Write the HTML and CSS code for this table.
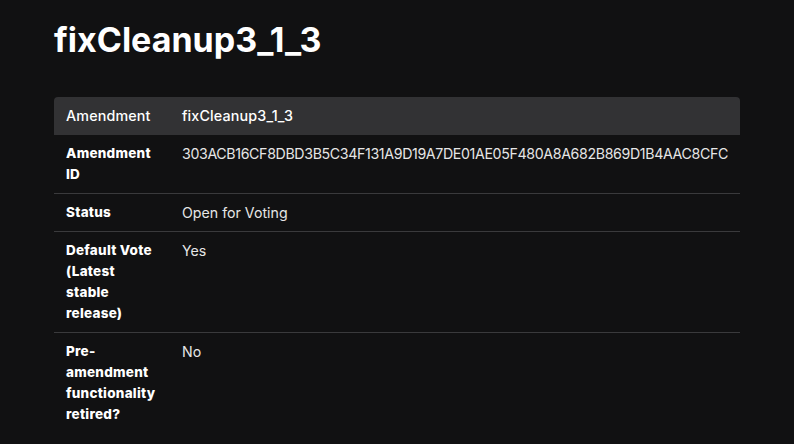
FILE: index.html
```html
<!DOCTYPE html>
<html>
<head>
<meta charset="utf-8">
<link rel="stylesheet" href="styles.css">
</head>
<body>
<main class="page">
  <h1 class="title">fixCleanup3_1_3</h1>
  <table class="amend">
    <thead>
      <tr><th class="label">Amendment</th><th class="value">fixCleanup3_1_3</th></tr>
    </thead>
    <tbody>
      <tr><td class="label">Amendment ID</td><td class="value hex">303ACB16CF8DBD3B5C34F131A9D19A7DE01AE05F480A8A682B869D1B4AAC8CFC</td></tr>
      <tr><td class="label">Status</td><td class="value">Open for Voting</td></tr>
      <tr><td class="label">Default Vote (Latest stable release)</td><td class="value">Yes</td></tr>
      <tr><td class="label">Pre-amendment functionality retired?</td><td class="value">No</td></tr>
    </tbody>
  </table>
</main>
</body>
</html>
```

FILE: styles.css
```css
html, body {
  margin: 0;
  padding: 0;
  background: #111112;
  color: #ffffff;
  font-family: Inter, "Noto Sans", sans-serif;
}
.page {
  padding: 20px 54px 0 54px;
}
.title {
  margin: 0 0 37px 0;
  font-size: 34px;
  line-height: 40px;
  font-weight: 700;
  letter-spacing: 0;
}
.amend {
  width: 686px;
  table-layout: fixed;
  border-collapse: separate;
  border-spacing: 0;
  font-size: 13.5px;
  line-height: 21px;
}
.amend th, .amend td {
  text-align: left;
  vertical-align: top;
  padding: 8px 12px;
}
.amend thead th {
  background: #323234;
  font-weight: 500;
  font-size: 14.3px;
  letter-spacing: 0.15px;
  padding: 8px 12px 9px 12px;
  color: #ffffff;
}
.amend thead th.label {
  width: 92px;
}
.amend thead th:first-child { border-top-left-radius: 4px; }
.amend thead th:last-child { border-top-right-radius: 4px; }
.amend td.label {
  padding-right: 14px;
  font-weight: 800;
  letter-spacing: 0.25px;
  color: #ffffff;
}
.amend td.value {
  color: #e6e6e6;
  font-size: 14.2px;
}
.amend td.hex {
  letter-spacing: -0.36px;
}
.amend tbody tr + tr td {
  border-top: 1px solid #3a3a3c;
}
```
